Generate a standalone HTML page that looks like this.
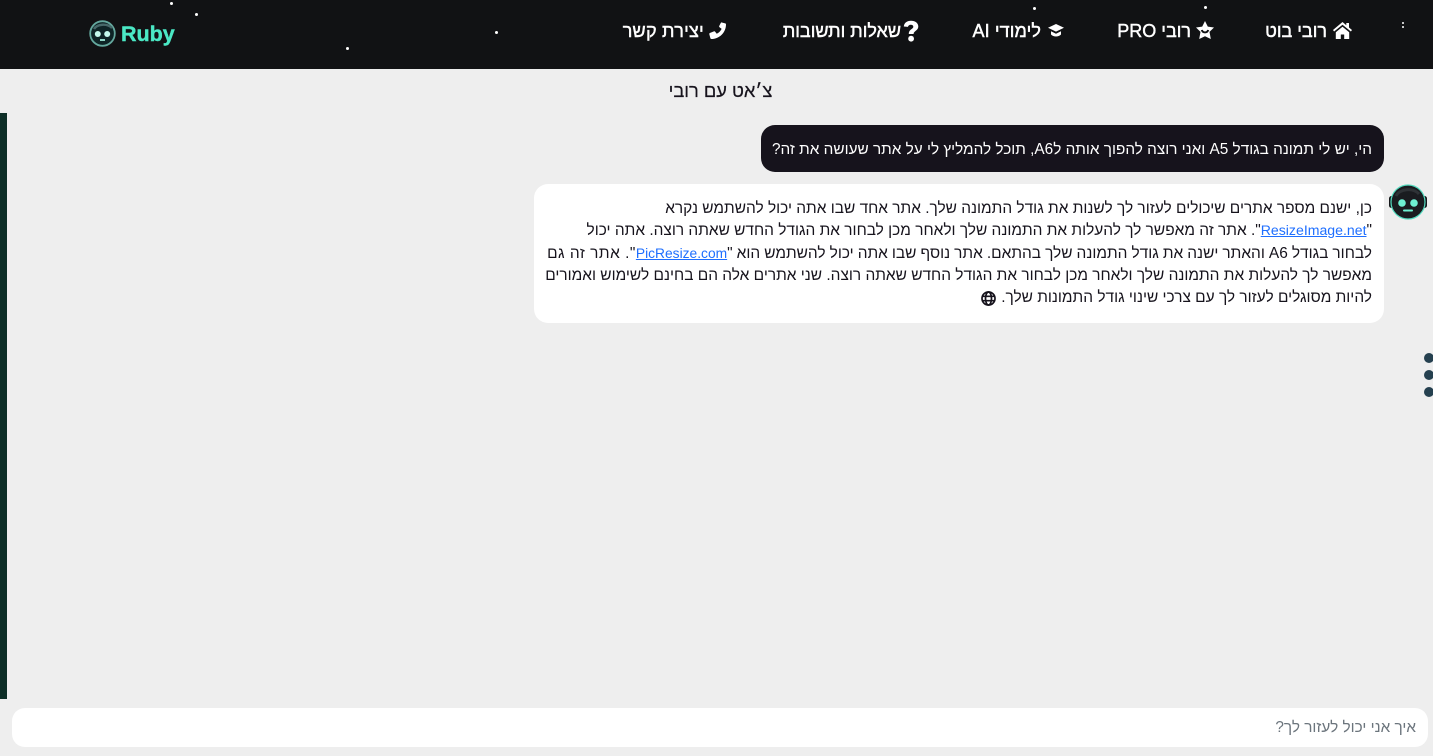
<!DOCTYPE html>
<html lang="he">
<head>
<meta charset="utf-8">
<title>Ruby</title>
<style>
html,body{margin:0;padding:0;width:1433px;height:756px;overflow:hidden;background:#eeeeee;font-family:"Liberation Sans","Noto Sans CJK JP",sans-serif}
.abs,.nav,.ln,.star,svg.a{position:absolute}
header{position:absolute;left:0;top:0;width:1433px;height:69px;background:#111214}
.nav{top:19px;height:24px;line-height:24px;color:#fff;font-size:18px;font-weight:400;white-space:nowrap;direction:rtl;-webkit-text-stroke:.45px #fff}
.star{background:#fff;border-radius:50%}
.ln{white-space:nowrap;direction:rtl;font-size:15.46px;line-height:22px;color:#16131c;height:22px}
a{color:#1f6fff;text-decoration:underline;font-size:14.1px}
</style>
</head>
<body>
<header>
  <i class="star" style="left:170px;top:2px;width:3px;height:3px"></i>
  <i class="star" style="left:195px;top:13px;width:3px;height:3px"></i>
  <i class="star" style="left:346px;top:47px;width:3px;height:3px"></i>
  <i class="star" style="left:495px;top:31px;width:3px;height:3px"></i>
  <i class="star" style="left:1033px;top:7px;width:3px;height:3px"></i>
  <i class="star" style="left:1204px;top:6px;width:3px;height:3px"></i>
  <i class="star" style="left:1402px;top:22px;width:2px;height:2px"></i>
  <i class="star" style="left:1402px;top:26px;width:2px;height:2px"></i>

  <svg class="a" style="left:88px;top:20px" width="29" height="27" viewBox="0 0 29 27">
    <circle cx="14.500" cy="13.500" r="12.300" fill="#0e2426" stroke="#64a89e" stroke-width="1.800"/>
    <path d="M6 9C9 4 19 3 24 8" fill="none" stroke="#47696a" stroke-width="2.400"/>
    <circle cx="9.800" cy="14" r="3" fill="#c4f8ec"/>
    <circle cx="19.200" cy="14" r="3" fill="#c4f8ec"/>
    <path d="M12 20h5" stroke="#9fe9d9" stroke-width="1.800"/>
  </svg>
  <div class="abs" style="left:121px;top:18px;font-size:21.500px;line-height:32px;font-weight:700;color:#4be8c5;-webkit-text-stroke:.4px #4be8c5">Ruby</div>

  <svg class="a" style="left:1333px;top:22px" width="19" height="17" viewBox="0 0 19 17"><path d="M9.500 0 0 8l1.100 1.500L9.500 2.700l8.400 6.800L19 8l-3-2.500V1h-2.700v2.300zM2.800 10.300v6.700h5V12.500h3.400V17h5v-6.700L9.500 4.700z" fill="#fff"/></svg>
  <div class="nav" style="right:106px">רובי בוט</div>

  <svg class="a" style="left:1196px;top:21px" width="18" height="18" viewBox="0 0 18 18"><path d="M9 0l2.800 5.600 6.200.9-4.500 4.400 1.300 7.100L9 15.300 3.200 18l1.300-7.100L0 6.500l6.200-.9z" fill="#fff"/><path d="M5.800 9c1 3.200 5.400 3.200 6.400 0" fill="none" stroke="#111214" stroke-width="2"/></svg>
  <div class="nav" style="right:242px"><span dir="rtl">רובי PRO</span></div>

  <svg class="a" style="left:1048px;top:24px" width="16" height="14" viewBox="0 0 16 14"><path d="M8 0 0 3.800 8 7.600l8-3.800zM3 7.300v3.200c2.500 2.600 7.500 2.600 10 0V7.300L8 9.700z" fill="#fff"/></svg>
  <div class="nav" style="right:392px;letter-spacing:.1px">לימודי AI</div>

  <svg class="a" style="left:903px;top:20px" width="16" height="22" viewBox="0 0 16 22"><path d="M.8 6.500C1.200 2.800 4 .8 8 .8c4 0 7.300 2.200 7.300 5.700 0 4.300-4.700 4.300-4.700 7.500H5.800c0-5 4.500-4.800 4.500-7.300 0-1.200-1-2-2.500-2-1.600 0-2.500.9-2.900 2.200z" fill="#fff"/><circle cx="8.100" cy="18.700" r="2.900" fill="#fff"/></svg>
  <div class="nav" style="right:532px">שאלות ותשובות</div>

  <svg class="a" style="left:709px;top:22px" width="17" height="17" viewBox="0 0 16 16"><path d="M11.500.3 15.300 1.300c.4.100.7.500.7.900C16 9.900 9.800 16 2.200 16c-.4 0-.8-.3-.9-.7L.3 11.500c-.1-.4.100-.9.500-1.100l3.800-1.600c.4-.2.800-.1 1.100.3l1.600 2c2-.9 3.600-2.600 4.600-4.600l-2-1.600c-.4-.3-.5-.7-.3-1.100L11.200.7c.1-.3.200-.4.300-.4z" fill="#fff"/></svg>
  <div class="nav" style="right:729px;letter-spacing:.25px">יצירת קשר</div>
</header>

<div class="abs" style="left:0;top:79px;width:1441px;text-align:center;direction:rtl;font-size:18.300px;line-height:24px;color:#16131c;-webkit-text-stroke:.2px #16131c">צ׳אט עם רובי</div>

<div class="abs" style="left:0;top:113px;width:7px;height:586px;background:#0d2e27"></div>

<div class="abs" style="left:761px;top:125px;width:623px;height:47px;background:#16131c;border-radius:14px"></div>
<div class="ln" style="right:61px;top:139px;color:#fff;font-size:15.350px">הי, יש לי תמונה בגודל A5 ואני רוצה להפוך אותה לA6, תוכל להמליץ לי על אתר שעושה את זה?</div>

<div class="abs" style="left:534px;top:184px;width:850px;height:139px;background:#fff;border-radius:14px"></div>
<div class="ln" style="right:61px;top:198px">כן, ישנם מספר אתרים שיכולים לעזור לך לשנות את גודל התמונה שלך. אתר אחד שבו אתה יכול להשתמש נקרא</div>
<div class="ln" style="right:61px;top:219px">"<a>ResizeImage.net</a>". אתר זה מאפשר לך להעלות את התמונה שלך ולאחר מכן לבחור את הגודל החדש שאתה רוצה. אתה יכול</div>
<div class="ln" style="right:61px;top:243px"><span style="word-spacing:-.25px">לבחור בגודל A6 והאתר ישנה את גודל התמונה שלך בהתאם. אתר נוסף שבו אתה יכול להשתמש הוא "</span><a style="font-size:13.800px">PicResize.com</a><span style="letter-spacing:.5px">". אתר זה גם</span></div>
<div class="ln" style="right:61px;top:265px">מאפשר לך להעלות את התמונה שלך ולאחר מכן לבחור את הגודל החדש שאתה רוצה. שני אתרים אלה הם בחינם לשימוש ואמורים</div>
<div class="ln" style="right:61px;top:287px">להיות מסוגלים לעזור לך עם צרכי שינוי גודל התמונות שלך.</div>
<svg class="a" style="left:981px;top:291px" width="15" height="15" viewBox="0 0 15 15" fill="none" stroke="#16131c" stroke-width="1.700"><circle cx="7.500" cy="7.500" r="6.500"/><ellipse cx="7.500" cy="7.500" rx="3" ry="6.500"/><path d="M1 5.300h13M1 9.700h13"/></svg>

<svg class="a" style="left:1389px;top:184px" width="38" height="36" viewBox="0 0 38 36">
  <rect x="0" y="12" width="6" height="12" rx="2.500" fill="#15181b"/>
  <rect x="32" y="12" width="6" height="12" rx="2.500" fill="#15181b"/>
  <circle cx="19" cy="18" r="17" fill="#1a1c20" stroke="#55dcc0" stroke-width="1.200"/>
  <path d="M7 12C10 5 24 3 30 10" fill="none" stroke="#2e3236" stroke-width="3"/>
  <circle cx="13" cy="19" r="3.800" fill="#6ef0d2"/>
  <circle cx="25" cy="19" r="3.800" fill="#6ef0d2"/>
  <path d="M15 26.500h8" stroke="#6ef0d2" stroke-width="2" stroke-linecap="round"/>
</svg>

<i class="abs" style="left:1424px;top:353px;width:10px;height:10px;border-radius:50%;background:#25404f"></i>
<i class="abs" style="left:1424px;top:370px;width:10px;height:10px;border-radius:50%;background:#25404f"></i>
<i class="abs" style="left:1424px;top:387px;width:10px;height:10px;border-radius:50%;background:#25404f"></i>

<div class="abs" style="left:12px;top:708px;width:1416px;height:39px;background:#fff;border-radius:13px"></div>
<div class="ln" style="right:17px;top:717px;font-size:15.350px;color:#6c757d">איך אני יכול לעזור לך?</div>
</body>
</html>
